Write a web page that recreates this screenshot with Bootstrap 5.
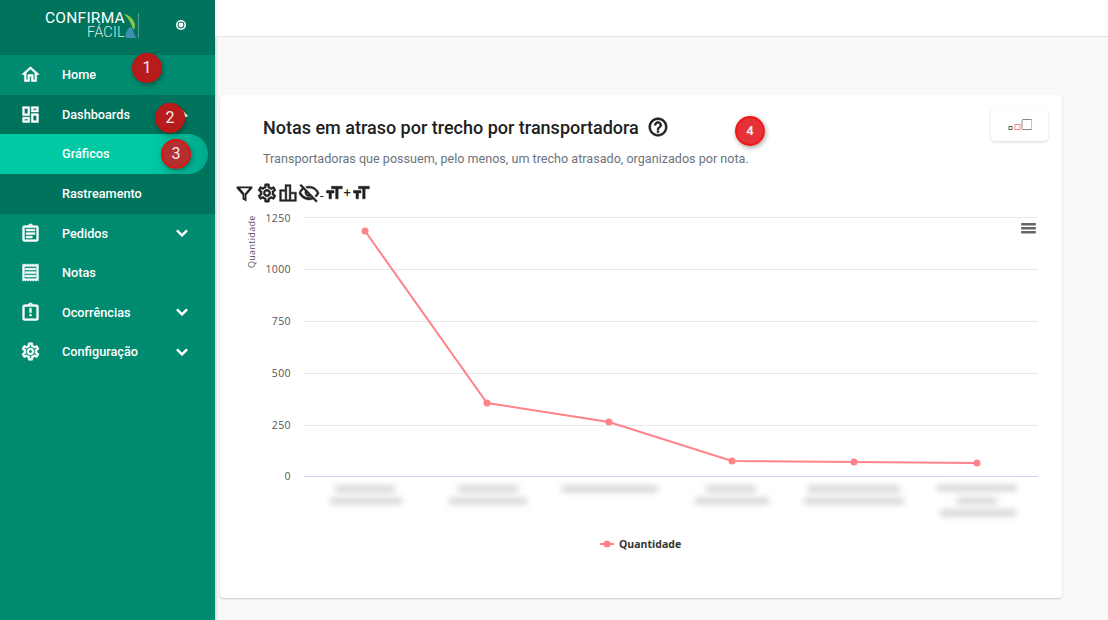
<!DOCTYPE html>
<html lang="pt-BR">
<head>
    <meta charset="UTF-8">
    <title>Notas em atraso</title>
    <link href="https://cdn.jsdelivr.net/npm/bootstrap@5.3.2/dist/css/bootstrap.min.css" rel="stylesheet">
    <style>
        html, body { height: 620px; overflow: hidden; }
        body { font-family: Roboto, sans-serif; background: #f9f9f9; position: relative; }
        .side-panel { width: 215px; height: 620px; background: #008b70; flex: none; box-shadow: 1px 0 3px rgba(0,0,0,.2); }
        .side-head { height: 55px; background: #00735d; color: #fff; }
        .logo-box { width: 95px; margin-left: 45px; margin-top: 10px; height: 32px; position: relative; }
        .logo-top { font: 400 15.5px/16px Roboto, sans-serif; letter-spacing: .25px; display: block; }
        .logo-bottom { font: 300 14.5px/14px Roboto, sans-serif; letter-spacing: .2px; display: block; margin-left: 42px; color: #d8ece6; }
        .logo-mark { position: absolute; left: 78px; top: 3px; }
        .logo-rule { width: 1px; height: 25px; background: #4f9f8d; margin: 13px 0 0 -2px; }
        .radio-mark { margin: 19px 0 0 36px; }
        .side-link { display: flex; align-items: center; height: 39.5px; color: #fff; font-size: 12.7px; font-weight: 500; text-decoration: none; padding-left: 20px; }
        .side-link:hover { color: #fff; }
        .side-link .nav-ico { width: 21px; height: 21px; margin-right: 21px; fill: #fff; stroke: #fff; stroke-width: .6; flex: none; }
        .side-link .nav-arrow { width: 22px; height: 22px; margin-left: auto; margin-right: 22px; fill: #fff; stroke: #fff; stroke-width: .8; }
        .side-sub { background: #00735d; padding-bottom: .5px; }
        .side-sub .side-link { padding-left: 62px; }
        .side-sub .side-link.has-ico { padding-left: 20px; }
        .side-sub .is-current { background: linear-gradient(90deg, #00c9a3 72%, #00a98a); width: 208px; border-radius: 0 20px 20px 0; }
        .top-strip { height: 37px; background: #fff; border-bottom: 1px solid #e6e6e6; }
        .chart-card { margin: 58px 46px 0 5px; height: 503px; border: 0; border-radius: 4px; box-shadow: 0 1px 2px rgba(0,0,0,.18); position: relative; }
        .head-row { margin: 21px 0 0 43px; }
        .chart-title { font-size: 18px; font-weight: 500; color: #212121; margin: 0; line-height: 24px; }
        .help-ico { fill: #212121; stroke: #212121; stroke-width: .7; margin-top: -3px; }
        .chart-sub { font-size: 12.6px; color: #6c757d; line-height: 16px; margin: 11px 0 0 43px; }
        .size-btn { position: absolute; top: 13px; right: 14px; width: 57px; height: 33px; background: #fff; border-radius: 4px; box-shadow: 0 1px 3px rgba(0,0,0,.16); }
        .tool-row { height: 20px; margin: 16px 0 0 15px; color: #212121; font-size: 13px; line-height: 20px; }
        .tool-row svg { width: 20px; height: 20px; fill: #212121; stroke: #212121; stroke-width: .6; flex: none; }
        .tool-row .tool-funnel { width: 19px; height: 19px; stroke-width: 0; }
        .tool-row .tool-gear { width: 22px; height: 22px; margin-left: 2px; }
        .tool-row .tool-eye { width: 22px; height: 22px; }
        .chart-svg { display: block; margin: 7px 0 0 17px; }
        .chart-svg text { font-family: "Open Sans", sans-serif; }
        .marker-dot { position: absolute; width: 30px; height: 30px; border-radius: 50%; color: #f5eaea; font: 400 16px/26px Roboto, sans-serif; text-align: center; background: #b71c1c; border: 2px solid #c41414; box-shadow: 1px 2px 5px rgba(0,0,0,.35); }
        .marker-three { background: #b43030; border-color: #e01212; }
        .marker-four { background: #e53238; border-color: #f31616; font: 700 13px/26px Roboto, sans-serif; }
    </style>
</head>
<body>
<div class="d-flex">
    <aside class="side-panel">
        <div class="side-head d-flex">
            <div class="logo-box">
                <span class="logo-top">CONFIRMA</span>
                <span class="logo-bottom">FÁCIL</span>
                <svg class="logo-mark" width="14" height="26" viewBox="0 0 14 26">
                    <path d="M1 1c6 1 11 6 11 12 0 2-1 3-2 4-1-6-4-11-9-16z" fill="#8bc34a"/>
                    <path d="M3 25c-1-5 1-9 5-11 2 3 3 7 5 11z" fill="#3f8fb5"/>
                </svg>
            </div>
            <div class="logo-rule"></div>
            <svg class="radio-mark" width="12" height="12" viewBox="0 0 12 12">
                <circle cx="6" cy="6" r="4.2" fill="none" stroke="#fff" stroke-width="1.6"/>
                <circle cx="6" cy="6" r="2.4" fill="#fff"/>
            </svg>
        </div>
        <nav>
            <a class="side-link" href="#">
                <svg class="nav-ico" viewBox="0 0 24 24"><path d="M12 5.69l5 4.5V18h-2v-6H9v6H7v-7.81l5-4.5M12 3L2 12h3v8h6v-6h2v6h6v-8h3L12 3z"/></svg>Home
            </a>
            <div class="side-sub">
                <a class="side-link has-ico" href="#">
                    <svg class="nav-ico" viewBox="0 0 24 24"><path d="M19 5v2h-4V5h4M9 5v6H5V5h4m10 8v6h-4v-6h4M9 17v2H5v-2h4M21 3h-8v6h8V3zM11 3H3v10h8V3zm10 8h-8v10h8V11zm-10 4H3v6h8v-6z"/></svg>Dashboards
                    <svg class="nav-arrow" viewBox="0 0 24 24"><path d="M12 8l-6 6 1.41 1.41L12 10.83l4.59 4.58L18 14z"/></svg>
                </a>
                <a class="side-link is-current" href="#">Gráficos</a>
                <a class="side-link" href="#">Rastreamento</a>
            </div>
            <a class="side-link" href="#">
                <svg class="nav-ico" viewBox="0 0 24 24"><path d="M7 15h7v2H7zm0-4h10v2H7zm0-4h10v2H7zm12-4h-4.18C14.4 1.84 13.3 1 12 1c-1.3 0-2.4.84-2.82 2H5c-1.1 0-2 .9-2 2v14c0 1.1.9 2 2 2h14c1.1 0 2-.9 2-2V5c0-1.1-.9-2-2-2zm-7-.25c.41 0 .75.34.75.75s-.34.75-.75.75-.75-.34-.75-.75.34-.75.75-.75zM19 19H5V5h14v14z"/></svg>Pedidos
                <svg class="nav-arrow" viewBox="0 0 24 24"><path d="M16.59 8.59L12 13.17 7.41 8.59 6 10l6 6 6-6z"/></svg>
            </a>
            <a class="side-link" href="#">
                <svg class="nav-ico" viewBox="0 0 24 24"><path d="M19.5 3.5L18 2l-1.5 1.5L15 2l-1.5 1.5L12 2l-1.5 1.5L9 2 7.5 3.5 6 2 4.5 3.5 3 2v20l1.5-1.5L6 22l1.5-1.5L9 22l1.5-1.5L12 22l1.5-1.5L15 22l1.5-1.5L18 22l1.5-1.5L21 22V2l-1.5 1.5zM19 19.09H5V4.91h14v14.18zM6 15h12v2H6zm0-4h12v2H6zm0-4h12v2H6z"/></svg>Notas
            </a>
            <a class="side-link" href="#">
                <svg class="nav-ico" viewBox="0 0 24 24"><path d="M11 14h2v2h-2zm0-7h2v5h-2zm8-4h-4.18C14.4 1.84 13.3 1 12 1c-1.3 0-2.4.84-2.82 2H5c-1.1 0-2 .9-2 2v14c0 1.1.9 2 2 2h14c1.1 0 2-.9 2-2V5c0-1.1-.9-2-2-2zm-7-.25c.41 0 .75.34.75.75s-.34.75-.75.75-.75-.34-.75-.75.34-.75.75-.75zM19 19H5V5h14v14z"/></svg>Ocorrências
                <svg class="nav-arrow" viewBox="0 0 24 24"><path d="M16.59 8.59L12 13.17 7.41 8.59 6 10l6 6 6-6z"/></svg>
            </a>
            <a class="side-link" href="#">
                <svg class="nav-ico" viewBox="0 0 24 24"><use href="#gear-shape"/></svg>Configuração
                <svg class="nav-arrow" viewBox="0 0 24 24"><path d="M16.59 8.59L12 13.17 7.41 8.59 6 10l6 6 6-6z"/></svg>
            </a>
        </nav>
    </aside>

    <main class="flex-grow-1">
        <div class="top-strip"></div>
        <div class="card chart-card">
            <div class="head-row d-flex align-items-center gap-2">
                <h1 class="chart-title">Notas em atraso por trecho por transportadora</h1>
                <svg class="help-ico" width="22" height="22" viewBox="0 0 24 24"><path d="M11 18h2v-2h-2v2zm1-16C6.48 2 2 6.48 2 12s4.48 10 10 10 10-4.48 10-10S17.52 2 12 2zm0 18c-4.41 0-8-3.59-8-8s3.59-8 8-8 8 3.59 8 8-3.59 8-8 8zm0-14c-2.21 0-4 1.79-4 4h2c0-1.1.9-2 2-2s2 .9 2 2c0 2-3 1.75-3 5h2c0-2.25 3-2.5 3-5 0-2.21-1.79-4-4-4z"/></svg>
            </div>
            <p class="chart-sub">Transportadoras que possuem, pelo menos, um trecho atrasado, organizados por nota.</p>
            <div class="size-btn d-flex align-items-center justify-content-center">
                <svg width="24" height="14" viewBox="0 0 24 14">
                    <rect x="1" y="8.5" width="3" height="3" fill="none" stroke="#666"/>
                    <rect x="7" y="6.5" width="5" height="5" fill="none" stroke="#ff8a8a"/>
                    <rect x="14" y="1.5" width="10" height="10" rx="1" fill="none" stroke="#888"/>
                </svg>
            </div>
            <div class="tool-row d-flex align-items-center">
                <svg class="tool-funnel" viewBox="0 0 24 24"><path d="M2 3h20v2.500l-7.500 8.500v8l-5-2.600v-5.400L2 5.500zM6.500 5.500l5.500 6.500v6l.5.3V12l5.500-6.500z"/></svg>
                <svg class="tool-gear" viewBox="0 0 24 24"><use href="#gear-shape"/></svg>
                <svg viewBox="0 0 24 24"><path d="M8.500 2h7v9H22v11H2V8h6.500zM10.500 4v16h3V4zM4 10v10h4.500V10zM15.500 13v7H20v-7z"/></svg>
                <svg class="tool-eye" viewBox="0 0 24 24"><path d="M12 6.500a9.770 9.770 0 0 1 8.820 5.500 9.700 9.700 0 0 1-2.410 3.120l1.410 1.410A11.800 11.800 0 0 0 23 12C21.270 7.610 17 4.500 12 4.500c-1.270 0-2.490.2-3.640.57l1.650 1.650c.65-.13 1.310-.22 1.990-.22zM2.010 3.870l2.680 2.680A11.740 11.740 0 0 0 1 12c1.730 4.390 6 7.500 11 7.500 1.520 0 2.980-.29 4.320-.82l3.420 3.420 1.410-1.410L3.420 2.450 2.010 3.870zm7.500 7.500 2.610 2.610c-.04.010-.08.020-.12.020a2.500 2.500 0 0 1-2.500-2.500c0-.05.010-.08.010-.13zm-3.400-3.400 1.750 1.750a4.600 4.600 0 0 0-.36 1.780 4.510 4.510 0 0 0 6.270 4.140l.98.980c-.88.240-1.800.38-2.750.38a9.770 9.770 0 0 1-8.820-5.500c.7-1.430 1.720-2.610 2.930-3.530z"/></svg>
                <span style="margin-top:6px;line-height:10px">-</span>
                <svg viewBox="0 0 24 24"><path d="M9 4v3h5v12h3V7h5V4H9zm-6 8h3v7h3v-7h3V9H3v3z"/></svg>
                <span>+</span>
                <svg viewBox="0 0 24 24"><path d="M9 4v3h5v12h3V7h5V4H9zm-6 8h3v7h3v-7h3V9H3v3z"/></svg>
            </div>
            <svg class="chart-svg" width="813" height="350" viewBox="237 210 813 350">
                <defs>
                    <filter id="soft" x="-20%" y="-60%" width="140%" height="220%"><feGaussianBlur stdDeviation="3.4"/></filter>
                    <path id="gear-shape" d="M19.43 12.98c.04-.32.07-.64.07-.98 0-.34-.03-.66-.07-.98l2.11-1.65c.19-.15.24-.42.12-.64l-2-3.46c-.09-.16-.26-.25-.44-.25-.06 0-.12.01-.17.03l-2.49 1c-.52-.4-1.08-.73-1.69-.98l-.38-2.65C14.46 2.18 14.25 2 14 2h-4c-.25 0-.46.18-.49.42l-.38 2.65c-.61.25-1.17.59-1.69.98l-2.49-1c-.06-.02-.12-.03-.18-.03-.17 0-.34.09-.43.25l-2 3.46c-.13.22-.07.49.12.64l2.11 1.65c-.04.32-.07.65-.07.98 0 .33.03.66.07.98l-2.11 1.65c-.19.15-.24.42-.12.64l2 3.46c.09.16.26.25.44.25.06 0 .12-.01.17-.03l2.49-1c.52.4 1.08.73 1.69.98l.38 2.65c.03.24.24.42.49.42h4c.25 0 .46-.18.49-.42l.38-2.65c.61-.25 1.17-.59 1.69-.98l2.49 1c.06.02.12.03.18.03.17 0 .34-.09.43-.25l2-3.46c.12-.22.07-.49-.12-.64l-2.11-1.65zm-1.98-1.71c.04.31.05.52.05.73 0 .21-.02.43-.05.73l-.14 1.13.89.7 1.08.84-.7 1.21-1.27-.51-1.04-.42-.9.68c-.43.32-.84.56-1.25.73l-1.06.43-.16 1.13-.2 1.35h-1.4l-.19-1.35-.16-1.13-1.06-.43c-.43-.18-.83-.41-1.23-.71l-.91-.7-1.06.43-1.27.51-.7-1.21 1.08-.84.89-.7-.14-1.13c-.03-.31-.05-.54-.05-.74s.02-.43.05-.73l.14-1.13-.89-.7-1.08-.84.7-1.21 1.27.51 1.04.42.9-.68c.43-.32.84-.56 1.25-.73l1.06-.43.16-1.13.2-1.35h1.39l.19 1.35.16 1.13 1.06.43c.43.18.83.41 1.23.71l.91.7 1.06-.43 1.27-.51.7 1.21-1.07.85-.89.7.14 1.13zM12 8c-2.21 0-4 1.79-4 4s1.79 4 4 4 4-1.79 4-4-1.79-4-4-4zm0 6c-1.1 0-2-.9-2-2s.9-2 2-2 2 .9 2 2-.9 2-2 2z"/>
                </defs>
                <g stroke="#e8e8e8" stroke-width="1">
                    <path d="M304 217.500H1038M304 269.500H1038M304 321.500H1038M304 373.500H1038M304 425.500H1038"/>
                </g>
                <path d="M304 476.500H1038" stroke="#ccd6eb"/>
                <g font-size="10.500" fill="#555" text-anchor="end" letter-spacing=".4">
                    <text x="291" y="222">1250</text>
                    <text x="291" y="273">1000</text>
                    <text x="291" y="325">750</text>
                    <text x="291" y="377">500</text>
                    <text x="291" y="429">250</text>
                    <text x="291" y="480">0</text>
                </g>
                <text transform="translate(255 268) rotate(-90)" font-size="9" fill="#5a4a5a" letter-spacing=".3">Quantidade</text>
                <polyline points="365,231 487,403 609,422 732,461 854,462 977,463" fill="none" stroke="#ff8389" stroke-width="2"/>
                <g fill="#ff8389">
                    <circle cx="365" cy="231" r="3.500"/><circle cx="487" cy="403" r="3.500"/><circle cx="609" cy="422" r="3.500"/>
                    <circle cx="732" cy="461" r="3.500"/><circle cx="854" cy="462" r="3.500"/><circle cx="977" cy="463" r="3.500"/>
                </g>
                <g fill="#777" opacity=".34" filter="url(#soft)">
                    <rect x="335" y="486" width="60" height="6"/><rect x="330" y="498" width="72" height="6"/>
                    <rect x="458" y="486" width="60" height="6"/><rect x="449" y="498" width="78" height="6"/>
                    <rect x="562" y="486" width="96" height="6"/>
                    <rect x="706" y="486" width="50" height="6"/><rect x="695" y="498" width="74" height="6"/>
                    <rect x="808" y="486" width="92" height="6"/><rect x="804" y="498" width="100" height="6"/>
                    <rect x="937" y="485" width="80" height="6"/><rect x="957" y="498" width="40" height="6"/><rect x="940" y="510" width="76" height="6"/>
                </g>
                <g fill="#666"><rect x="1021" y="223" width="15" height="2.500" rx="1"/><rect x="1021" y="227" width="15" height="2.500" rx="1"/><rect x="1021" y="231" width="15" height="2.500" rx="1"/></g>
                <path d="M600 544h14" stroke="#ff8389" stroke-width="2"/>
                <circle cx="607" cy="544" r="3.500" fill="#ff8389"/>
                <text x="619" y="548" font-size="10.500" font-weight="700" fill="#333">Quantidade</text>
            </svg>
        </div>
    </main>
</div>

<div class="marker-dot" style="left:132px;top:53px">1</div>
<div class="marker-dot" style="left:155px;top:103px">2</div>
<div class="marker-dot marker-three" style="left:161px;top:139px">3</div>
<div class="marker-dot marker-four" style="left:735px;top:116px">4</div>

<script src="https://cdn.jsdelivr.net/npm/bootstrap@5.3.2/dist/js/bootstrap.bundle.min.js"></script>
</body>
</html>
